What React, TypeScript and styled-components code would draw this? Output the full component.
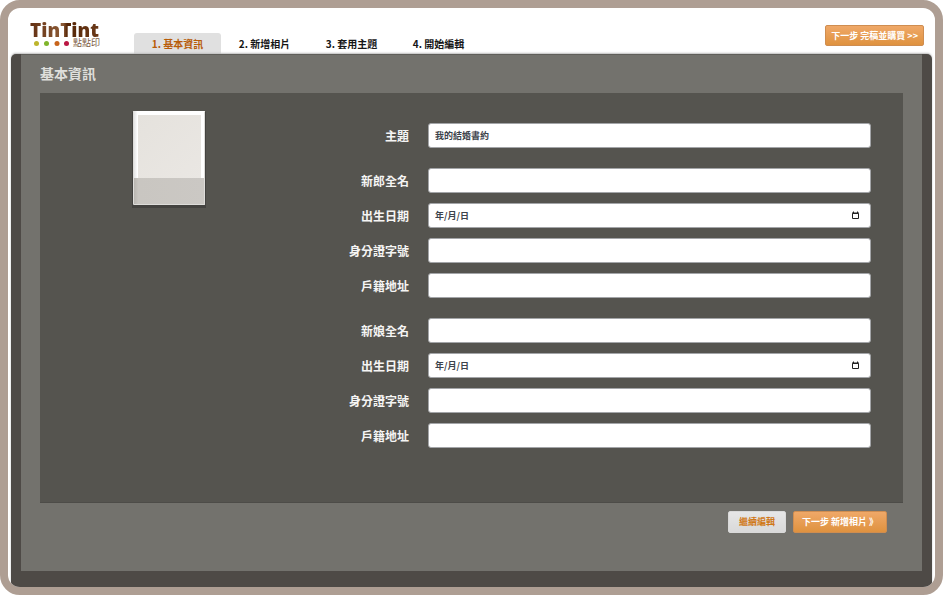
import React from "react";
import styled, { createGlobalStyle, css } from "styled-components";

const GlobalStyle = createGlobalStyle`
  * { box-sizing: border-box; }
  html, body, #root { height: 100%; }
  body {
    margin: 0;
    background: #fff;
    font-family: "Noto Sans CJK TC", "Noto Sans", sans-serif;
  }
  button, input { font-family: inherit; }
`;

const Page = styled.div`
  min-height: 100%;
  display: flex;
  padding: 0 1px 1px 0;
`;

const Frame = styled.div`
  flex: 1;
  display: flex;
  flex-direction: column;
  border: 8px solid #ae9e93;
  border-radius: 20px;
  background: #fff;
  overflow: hidden;
`;

const Header = styled.header`
  display: flex;
  align-items: flex-end;
  height: 46px;
  padding: 0 11px 0 22px;
`;

const Logo = styled.a`
  align-self: flex-start;
  width: 104px;
  padding-top: 14px;
  text-decoration: none;
`;

const LogoName = styled.span`
  display: block;
  width: max-content;
  font: 800 19px/16px "Open Sans", "Noto Sans", sans-serif;
  background: linear-gradient(90deg, #633013 0%, #8c5b36 48%, #542405 54%, #6b3a1a 100%);
  background-clip: text;
  color: transparent;
`;

const LogoSub = styled.span`
  display: flex;
  align-items: center;
  gap: 4px;
  height: 10px;
  font-size: 9px;
  line-height: 10px;
  color: #7d5a42;
`;

const Tabs = styled.nav`
  display: flex;
  flex: 1;
`;

const Tab = styled.a<{ $active?: boolean }>`
  width: 87px;
  height: 21px;
  padding-top: 1px;
  border-radius: 3px 3px 0 0;
  text-align: center;
  text-decoration: none;
  white-space: nowrap;
  font-size: 10px;
  line-height: 20px;
  font-weight: 700;
  color: ${(p) => (p.$active ? "#b85c08" : "#161616")};
  background: ${(p) => (p.$active ? "#e0e0e0" : "transparent")};
`;

const orange = css`
  padding: 0 8px;
  color: #fff;
  background: linear-gradient(#efa868, #df923f);
  border: 1px solid #cf8d50;
`;
const grey = css`
  padding: 0 10px;
  color: #d07716;
  background: linear-gradient(#e6e6e6, #d9d9d9);
  border: 1px solid #d9d9d9;
`;

const Button = styled.button<{ $tone: "orange" | "grey" }>`
  height: 22px;
  border-radius: 2px;
  font-size: 9px;
  line-height: 20px;
  font-weight: 700;
  white-space: nowrap;
  cursor: pointer;
  ${(p) => (p.$tone === "orange" ? orange : grey)}
`;

const Checkout = styled(Button)`
  height: 21px;
  padding: 0 5px;
  margin-bottom: 8px;
`;

const Desk = styled.div`
  flex: 1;
  display: flex;
  margin: 0 3px;
  padding: 0 10px 16px;
  border-radius: 5px;
  background: #4e4a46;
  box-shadow: 0 -1px 2px #bdbdbd;
`;

const Panel = styled.main`
  flex: 1;
  padding: 0 19px;
  background: #73726d;
  border-top: 1px solid #605f5a;
`;

const Title = styled.h1`
  margin: 0;
  height: 38px;
  font-size: 14px;
  line-height: 37px;
  font-weight: 700;
  color: #dededb;
`;

const FormBox = styled.section`
  display: flex;
  padding: 18px 32px 54px 0;
  background: #55544f;
  border-bottom: 1px solid #4d4c48;
`;

const ThumbColumn = styled.div`
  width: 258px;
  display: flex;
  justify-content: center;
  align-items: flex-start;
`;

const Fields = styled.form`
  flex: 1;
  display: flex;
  flex-direction: column;
  gap: 20px;
  padding-top: 12px;
`;

const Group = styled.div`
  display: flex;
  flex-direction: column;
  gap: 10px;
`;

const Row = styled.div`
  display: flex;
  align-items: center;
  gap: 19px;
`;

const Label = styled.label`
  width: 111px;
  text-align: right;
  font-size: 12px;
  line-height: 20px;
  font-weight: 700;
  color: #f5f5f4;
`;

const Control = styled.div`
  flex: 1;
  display: flex;
  align-items: center;
  height: 25px;
  padding-right: 10px;
  background: #fff;
  border: 1px solid #a3a5a8;
  border-radius: 3px;
`;

const Input = styled.input`
  flex: 1;
  min-width: 0;
  height: 23px;
  padding: 0 6px;
  border: 0;
  border-radius: 3px;
  outline: 0;
  background: transparent;
  font-size: 9px;
  font-weight: 700;
  color: #3c434b;
  &::placeholder { color: #3c434b; opacity: 1; }
`;

const PickerButton = styled.button`
  display: flex;
  padding: 0;
  border: 0;
  background: none;
  cursor: pointer;
`;

const Actions = styled.div`
  display: flex;
  justify-content: flex-end;
  gap: 7px;
  padding: 8px 16px 0;
`;

type FieldProps = { id: string; label: string; value?: string; date?: boolean };

function Field({ id, label, value, date }: FieldProps) {
  return (
    <Row>
      <Label htmlFor={id}>{label}</Label>
      <Control>
        <Input id={id} type="text" defaultValue={value} placeholder={date ? "年/月/日" : undefined} />
        {date && (
          <PickerButton type="button" aria-label="選擇日期">
            <svg width="9" height="9" viewBox="0 0 9 9" fill="none" stroke="#222">
              <path d="M1.5 2.5h6v5h-6z" />
              <path d="M1 2h7M2.5 .5v1.5M6.5 .5v1.5" />
            </svg>
          </PickerButton>
        )}
      </Control>
    </Row>
  );
}

function Person({ id, name }: { id: string; name: string }) {
  return (
    <Group>
      <Field id={`${id}-name`} label={name} />
      <Field id={`${id}-birth`} label="出生日期" date />
      <Field id={`${id}-number`} label="身分證字號" />
      <Field id={`${id}-address`} label="戶籍地址" />
    </Group>
  );
}

function Cover() {
  return (
    <svg width="74" height="97" viewBox="0 0 74 97" role="img" aria-label="封面">
      <defs>
        <linearGradient id="paper" x1="0" y1="0" x2="1" y2="1">
          <stop offset="0" stopColor="#e5e2dd" />
          <stop offset="1" stopColor="#eae7e3" />
        </linearGradient>
        <linearGradient id="spine">
          <stop offset="0" stopColor="#e4e4e4" />
          <stop offset=".05" stopColor="#fff" />
        </linearGradient>
        <linearGradient id="band">
          <stop offset="0" stopColor="#b9b6b1" />
          <stop offset=".06" stopColor="#c9c6c1" />
          <stop offset="1" stopColor="#cbc8c4" />
        </linearGradient>
      </defs>
      <rect width="74" height="96" y="1" fill="#444340" />
      <rect x="2" y="0" width="71" height="94" fill="url(#spine)" />
      <rect x="6" y="4" width="63" height="64" fill="url(#paper)" />
      <rect x="2" y="67" width="71" height="27" fill="url(#band)" />
      <path d="M1.500 0v93.500h71v-93" fill="none" stroke="#deddda" />
    </svg>
  );
}

const steps = ["1. 基本資訊", "2. 新增相片", "3. 套用主題", "4. 開始編輯"];

export default function App() {
  return (
    <>
      <GlobalStyle />
      <Page>
        <Frame>
          <Header>
            <Logo href="#">
              <LogoName>TinTint</LogoName>
              <LogoSub>
                <svg width="39" height="7" viewBox="0 0 39 7">
                  <circle cx="6.500" cy="3.500" r="2.500" fill="#bdb52c" />
                  <circle cx="16.500" cy="3.500" r="2.500" fill="#80b52b" />
                  <circle cx="27" cy="3.500" r="2.500" fill="#c8641b" />
                  <circle cx="36.500" cy="3.500" r="2.500" fill="#bb1743" />
                </svg>
                點點印
              </LogoSub>
            </Logo>
            <Tabs>
              {steps.map((s, i) => (
                <Tab key={s} href="#" $active={i === 0}>{s}</Tab>
              ))}
            </Tabs>
            <Checkout $tone="orange" type="button">下一步 完稿並購買 &gt;&gt;</Checkout>
          </Header>
          <Desk>
            <Panel>
              <Title>基本資訊</Title>
              <FormBox>
                <ThumbColumn><Cover /></ThumbColumn>
                <Fields>
                  <Group><Field id="subject" label="主題" value="我的結婚書約" /></Group>
                  <Person id="groom" name="新郎全名" />
                  <Person id="bride" name="新娘全名" />
                </Fields>
              </FormBox>
              <Actions>
                <Button $tone="grey" type="button">繼續編輯</Button>
                <Button $tone="orange" type="button">下一步 新增相片 》</Button>
              </Actions>
            </Panel>
          </Desk>
        </Frame>
      </Page>
    </>
  );
}
